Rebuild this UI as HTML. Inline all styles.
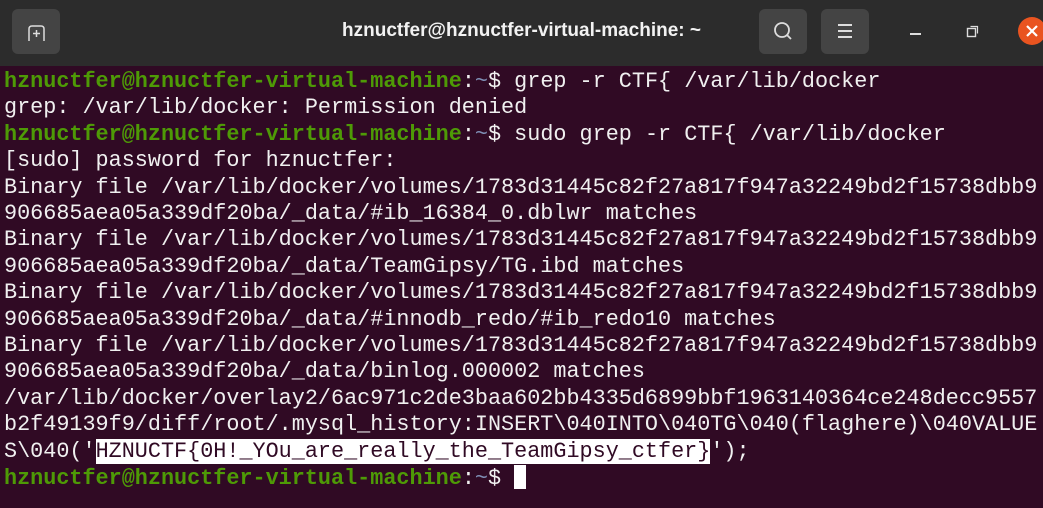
<!DOCTYPE html><html><head><meta charset="utf-8"><style>
html,body{margin:0;width:1043px;height:508px;overflow:hidden;background:#300a24;}
.hd{position:absolute;left:0;top:0;width:1043px;height:66px;background:#2c2c2c;}
.btn{position:absolute;top:9px;width:48px;height:45px;background:#444;border-radius:6px;}
.title{position:absolute;left:0;width:1043px;top:20px;text-align:center;color:#f2f2f2;font:bold 19px "Liberation Sans",sans-serif;}
pre{position:absolute;left:4px;top:69px;margin:0;font:21.8px/26.4px "Liberation Mono",monospace;color:#f0f0f0;white-space:pre;}
.g{color:#4e9a06;font-weight:bold}.b{color:#7f8fb5}
.h{background:#fff;color:#300a24}
.cur{display:inline-block;width:12px;height:24px;background:#fff;vertical-align:-5px}
</style></head><body>
<div class="hd">
<div class="btn" style="left:12px"><svg width="48" height="45"><path d="M17 32V20q0-3 3-3h9q3 0 3 3v12" fill="none" stroke="#ddd" stroke-width="1.5"/><path d="M24.5 21v7M21 24.5h7" stroke="#ddd" stroke-width="1.5"/></svg></div>
<div class="title">hznuctfer@hznuctfer-virtual-machine: ~</div>
<div class="btn" style="left:759px"><svg width="48" height="45"><circle cx="23" cy="21" r="7" fill="none" stroke="#ddd" stroke-width="1.8"/><path d="M28 26l4 4" stroke="#ddd" stroke-width="1.8"/></svg></div>
<div class="btn" style="left:821px"><svg width="48" height="45"><path d="M17 16h14M17 22h14M17 28h14" stroke="#ddd" stroke-width="2"/></svg></div>
<div style="position:absolute;left:910px;top:33px;width:11px;height:2px;background:#ddd"></div>
<svg style="position:absolute;left:966px;top:24px" width="14" height="14"><rect x="1.5" y="4.5" width="8" height="8" fill="none" stroke="#ddd" stroke-width="1.4"/><path d="M4.5 2.5h7v7" fill="none" stroke="#ddd" stroke-width="1.2"/></svg>
<svg style="position:absolute;left:1017px;top:16px" width="30" height="30"><circle cx="15" cy="15" r="14" fill="#e95420"/><path d="M10 10l10 10M20 10l-10 10" stroke="#fff" stroke-width="2.2"/></svg>
</div>
<pre><span class="g">hznuctfer@hznuctfer-virtual-machine</span>:<span class="b">~</span>$ grep -r CTF{ /var/lib/docker
grep: /var/lib/docker: Permission denied
<span class="g">hznuctfer@hznuctfer-virtual-machine</span>:<span class="b">~</span>$ sudo grep -r CTF{ /var/lib/docker
[sudo] password for hznuctfer:
Binary file /var/lib/docker/volumes/1783d31445c82f27a817f947a32249bd2f15738dbb9
906685aea05a339df20ba/_data/#ib_16384_0.dblwr matches
Binary file /var/lib/docker/volumes/1783d31445c82f27a817f947a32249bd2f15738dbb9
906685aea05a339df20ba/_data/TeamGipsy/TG.ibd matches
Binary file /var/lib/docker/volumes/1783d31445c82f27a817f947a32249bd2f15738dbb9
906685aea05a339df20ba/_data/#innodb_redo/#ib_redo10 matches
Binary file /var/lib/docker/volumes/1783d31445c82f27a817f947a32249bd2f15738dbb9
906685aea05a339df20ba/_data/binlog.000002 matches
/var/lib/docker/overlay2/6ac971c2de3baa602bb4335d6899bbf1963140364ce248decc9557
b2f49139f9/diff/root/.mysql_history:INSERT\040INTO\040TG\040(flaghere)\040VALUE
S\040('<span class="h">HZNUCTF{0H!_YOu_are_really_the_TeamGipsy_ctfer}</span>');
<span class="g">hznuctfer@hznuctfer-virtual-machine</span>:<span class="b">~</span>$ <span class="cur"></span></pre>
</body></html>
